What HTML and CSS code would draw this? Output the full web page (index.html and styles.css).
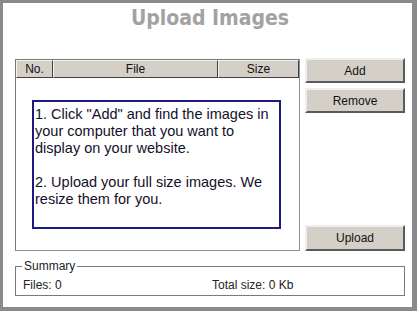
FILE: index.html
```html
<!DOCTYPE html>
<html lang="en">
<head>
    <meta charset="UTF-8">
    <title>Upload Images</title>
    <link rel="stylesheet" href="styles.css">
</head>
<body>
    <div class="frame">
        <h1>Upload Images</h1>

        <div class="main">
            <div class="list">
                <div class="list-head">
                    <div class="col col-no">No.</div>
                    <div class="col col-file">File</div>
                    <div class="col col-size">Size</div>
                </div>
                <div class="hint">
                    1. Click "Add" and find the images in your computer that you want to display on your website.<br><br>
                    2. Upload your full size images. We resize them for you.
                </div>
            </div>

            <div class="actions">
                <button class="btn">Add</button>
                <button class="btn">Remove</button>
                <button class="btn btn-upload">Upload</button>
            </div>
        </div>

        <fieldset class="summary">
            <legend>Summary</legend>
            <div class="summary-row">
                <span class="files">Files: 0</span>
                <span class="total">Total size: 0 Kb</span>
            </div>
        </fieldset>
    </div>
</body>
</html>
```

FILE: styles.css
```css
html, body {
    margin: 0;
    padding: 0;
    height: 100%;
}

body {
    background-color: #8a8a8a;
    font-family: 'Liberation Sans', Arial, sans-serif;
    font-size: 12px;
    color: #111;
    padding: 3px 5px 4px 3px;
    box-sizing: border-box;
}

.frame {
    background-color: #fff;
    height: 100%;
    box-sizing: border-box;
    padding: 0 7px 0 12px;
}

h1 {
    margin: 0;
    height: 55px;
    padding-top: 2px;
    box-sizing: border-box;
    text-align: center;
    font-family: 'DejaVu Sans Condensed', 'DejaVu Sans', sans-serif;
    font-weight: bold;
    font-size: 21px;
    line-height: 26px;
    color: #a2a2a2;
}

.main {
    display: flex;
    gap: 5px;
    height: 193px;
}

.list {
    width: 285px;
    height: 192px;
    margin-top: 1px;
    box-sizing: border-box;
    border: 1px solid #7a7a7a;
    border-right-color: #909090;
    border-bottom-color: #909090;
}

.list-head {
    display: flex;
    height: 18px;
}

.col {
    background-color: #d4d0c8;
    border: 1px solid;
    border-color: #f4f4f4 #404040 #404040 #f4f4f4;
    box-sizing: border-box;
    text-align: center;
    line-height: 16px;
    color: #111;
}

.col-no {
    width: 37px;
}

.col-file {
    width: 165px;
}

.col-size {
    width: 81px;
}

.hint {
    width: 249px;
    height: 129px;
    margin: 22px 0 0 16px;
    box-sizing: border-box;
    border: 2px solid #1c1a7e;
    padding: 4px 0 0 1px;
    font-size: 14.5px;
    line-height: 17px;
    color: #15102a;
}

.actions {
    display: flex;
    flex-direction: column;
    gap: 5px;
    width: 100px;
}

.btn {
    height: 25px;
    width: 100px;
    background-color: #d4d0c8;
    border: 2px solid;
    border-color: #eeeeee #5a5a5a #5a5a5a #eeeeee;
    font-family: 'Liberation Sans', Arial, sans-serif;
    font-size: 12px;
    color: #111;
    padding: 0;
}

.btn-upload {
    margin-top: auto;
    height: 26px;
}

.summary {
    margin: 9px 0 0 0;
    padding: 0 7px 0 7px;
    height: 36px;
    box-sizing: border-box;
    border: 1px solid #7a7a7a;
}

.summary legend {
    padding: 0 2px;
    margin-left: -1px;
    font-size: 12px;
    line-height: 13px;
    color: #222;
}

.summary-row {
    display: flex;
    line-height: 14px;
    padding-top: 5px;
    color: #222;
}

.files {
    width: 189px;
}
```
